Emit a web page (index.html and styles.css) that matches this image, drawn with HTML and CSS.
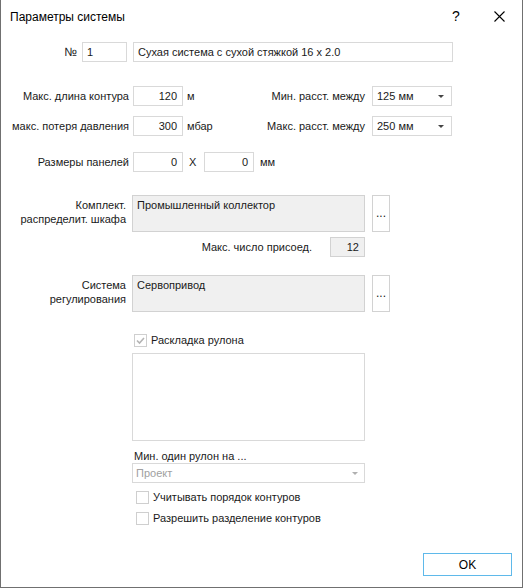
FILE: index.html
```html
<!DOCTYPE html>
<html lang="ru">
<head>
  <meta charset="UTF-8">
  <title>Параметры системы</title>
  <link rel="stylesheet" href="styles.css">
</head>
<body>
  <div class="window">
    <div class="titlebar">
      <span class="title">Параметры системы</span>
      <span class="help">?</span>
      <span class="close">
        <svg width="11" height="11" viewBox="0 0 11 11"><path d="M0.5 0.5 L10.5 10.5 M10.5 0.5 L0.5 10.5" stroke="#000" stroke-width="1.1"/></svg>
      </span>
    </div>

    <div class="row row-num">
      <span class="num-lbl">№</span>
      <div class="inp num">1</div>
      <div class="inp name">Сухая система с сухой стяжкой 16 x 2.0</div>
    </div>

    <div class="row row-a">
      <span class="lbl">Макс. длина контура</span>
      <div class="inp small right">120</div>
      <span class="unit">м</span>
      <span class="lbl-r">Мин. расст. между</span>
      <div class="inp select">125 мм<span class="arrow"></span></div>
    </div>

    <div class="row row-b">
      <span class="lbl">макс. потеря давления</span>
      <div class="inp small right">300</div>
      <span class="unit">мбар</span>
      <span class="lbl-r">Макс. расст. между</span>
      <div class="inp select">250 мм<span class="arrow"></span></div>
    </div>

    <div class="row row-c">
      <span class="lbl">Размеры панелей</span>
      <div class="inp small right">0</div>
      <span class="times">X</span>
      <div class="inp small right">0</div>
      <span class="unit-mm">мм</span>
    </div>

    <div class="block block-collector">
      <span class="block-lbl">Комплект.<br>распределит. шкафа</span>
      <div class="ro-box">Промышленный коллектор</div>
      <div class="dots">...</div>
    </div>

    <div class="row row-max">
      <span class="max-lbl">Макс. число присоед.</span>
      <div class="ro-small">12</div>
    </div>

    <div class="block block-reg">
      <span class="block-lbl">Система<br>регулирования</span>
      <div class="ro-box">Сервопривод</div>
      <div class="dots">...</div>
    </div>

    <div class="lower">
      <label class="check check-main">
        <span class="box checked">
          <svg width="11" height="11" viewBox="0 0 11 11"><path d="M2 5.5 L4.5 8 L9 3" fill="none" stroke="#b4b4b4" stroke-width="1.6"/></svg>
        </span>
        Раскладка рулона
      </label>
      <div class="listbox"></div>
      <div class="caption">Мин. один рулон на ...</div>
      <div class="inp combo">Проект<span class="arrow light"></span></div>
      <label class="check check-sub"><span class="box"></span>Учитывать порядок контуров</label>
      <label class="check check-sub"><span class="box"></span>Разрешить разделение контуров</label>
    </div>

    <div class="footer">
      <button class="ok">OK</button>
    </div>
  </div>
</body>
</html>
```

FILE: styles.css
```css
* { box-sizing: border-box; }
body {
  margin: 0;
  font-family: "Liberation Sans", Arial, sans-serif;
  font-size: 11px;
  line-height: 14px;
  color: #1a1a1a;
  background: #fff;
}

.window {
  width: 523px;
  height: 588px;
  border: 1px solid #707070;
  border-top: none;
  background: #fff;
}

.titlebar {
  height: 34px;
  display: flex;
  align-items: center;
  padding-left: 9px;
}
.title { font-size: 12px; color: #000; flex: 1; padding-bottom: 1px; }
.help { font-size: 14px; width: 42px; color: #000; padding-bottom: 2px; }
.close { width: 28px; display: flex; padding-bottom: 2px; }

.row { display: flex; align-items: center; height: 20px; }

.inp {
  height: 20px;
  border: 1px solid #d9d9d9;
  background: #fff;
  padding: 2px 4px;
  white-space: nowrap;
}
.inp.right { text-align: right; padding-right: 5px; }

.row-num { margin-top: 8px; }
.num-lbl { width: 81px; text-align: right; padding-right: 5px; font-size: 12px; }
.num { width: 45px; }
.name { width: 320px; margin-left: 6px; }

.row-a { margin-top: 24px; }
.row-b { margin-top: 10px; }
.row-c { margin-top: 16px; }

.lbl { width: 132px; text-align: right; padding-right: 4px; }
.small { width: 50px; }
.unit { width: 54px; padding-left: 4px; }
.lbl-r { width: 135px; text-align: right; padding-right: 7px; }
.select { width: 80px; position: relative; }

.arrow {
  position: absolute;
  right: 7px;
  top: 8px;
  border-left: 3px solid transparent;
  border-right: 3px solid transparent;
  border-top: 3px solid #444;
}
.arrow.light { border-top-color: #b0b0b0; right: 6px; }

.times { width: 21px; padding-left: 6px; }
.unit-mm { padding-left: 6px; }

.block { display: flex; height: 37px; }
.block-collector { margin-top: 23px; }
.block-reg { margin-top: 18px; }
.block-lbl { width: 131px; text-align: right; padding-right: 6px; padding-top: 3px; }
.ro-box {
  width: 233px;
  height: 37px;
  background: #f0f0f0;
  border: 1px solid #d2d2d2;
  padding: 2px 4px;
}
.dots {
  width: 18px;
  height: 37px;
  margin-left: 7px;
  border: 1px solid #d2d2d2;
  background: #fff;
  text-align: center;
  padding-top: 12px;
  font-size: 12px;
  line-height: 10px;
}

.row-max { margin-top: 5px; }
.max-lbl { width: 329px; text-align: right; padding-right: 18px; }
.ro-small {
  width: 35px;
  height: 20px;
  background: #f0f0f0;
  border: 1px solid #d2d2d2;
  text-align: right;
  padding: 2px 5px 0 0;
}

.lower { margin-left: 131px; width: 233px; }
.check { display: flex; align-items: center; height: 14px; }
.box {
  width: 13px;
  height: 13px;
  border: 1px solid #cfcfcf;
  background: #fff;
  display: flex;
  align-items: center;
  justify-content: center;
  margin-right: 4px;
}
.check-main { margin-top: 21px; padding-left: 2px; }
.check-sub { padding-left: 4px; margin-top: 7px; }

.listbox {
  height: 88px;
  margin-top: 6px;
  border: 1px solid #d9d9d9;
  background: #fff;
}
.caption { margin-top: 8px; padding-left: 2px; }
.combo { position: relative; color: #a0a0a0; padding-left: 3px; }

.footer { display: flex; justify-content: flex-end; padding-right: 10px; margin-top: 28px; }
.ok {
  width: 89px;
  height: 23px;
  border: 1px solid #5fb9ea;
  background: #fff;
  font-family: "Liberation Sans", Arial, sans-serif;
  font-size: 12px;
  color: #000;
  padding: 0;
}
```
